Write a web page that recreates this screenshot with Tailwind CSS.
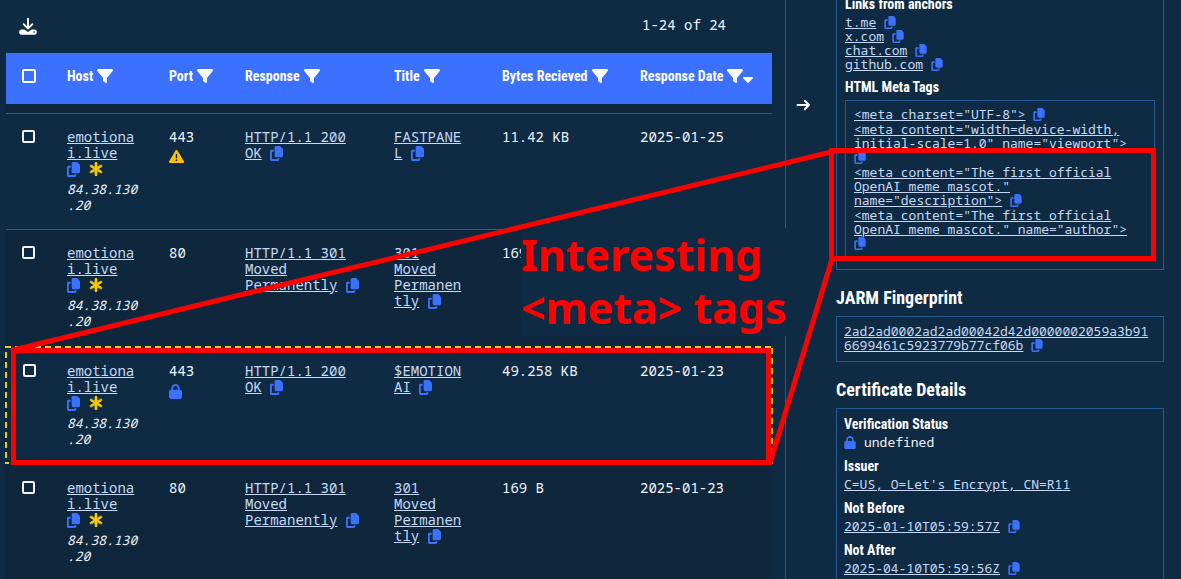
<!DOCTYPE html>
<html lang="en">
<head>
<meta charset="utf-8">
<title>Hosts</title>
<script src="https://cdn.jsdelivr.net/npm/@tailwindcss/browser@4"></script>
</head>
<body class="bg-[#0f2b43]">
<svg class="hidden" aria-hidden="true">
  <symbol id="copy" viewBox="0 0 448 512"><path d="M208 0H332.1c12.7 0 24.9 5.1 33.9 14.1l67.9 67.9c9 9 14.1 21.2 14.1 33.9V336c0 26.5-21.5 48-48 48H208c-26.5 0-48-21.5-48-48V48c0-26.5 21.5-48 48-48zM48 128h80v64H64V448H256V416h64v48c0 26.5-21.5 48-48 48H48c-26.5 0-48-21.5-48-48V176c0-26.5 21.5-48 48-48z"/></symbol>
  <symbol id="filter" viewBox="0 32 512 448" preserveAspectRatio="none"><path d="M3.9 54.9C10.5 40.9 24.5 32 40 32H472c15.5 0 29.5 8.9 36.1 22.9s4.6 30.5-5.2 42.5L320 320.9V448c0 12.1-6.8 23.2-17.7 28.6s-23.8 4.3-33.5-3l-64-48c-8.1-6-12.8-15.5-12.8-25.6V320.9L9 97.3C-.7 85.4-2.8 68.8 3.9 54.9z"/></symbol>
  <symbol id="lock" viewBox="0 0 448 512"><path d="M144 144v48H304V144c0-44.2-35.8-80-80-80s-80 35.8-80 80zM80 192V144C80 64.5 144.5 0 224 0s144 64.5 144 144v48h16c35.3 0 64 28.7 64 64V448c0 35.3-28.7 64-64 64H64c-35.3 0-64-28.7-64-64V256c0-35.3 28.7-64 64-64H80z"/></symbol>
  <symbol id="warn" viewBox="0 0 512 512"><path d="M256 32c14.2 0 27.3 7.5 34.5 19.8l216 368c7.3 12.4 7.3 27.7 .2 40.1S486.3 480 472 480H40c-14.3 0-27.6-7.7-34.7-20.1s-7-27.8 .2-40.1l216-368C228.7 39.5 241.8 32 256 32zm0 128c-13.3 0-24 10.7-24 24V296c0 13.3 10.7 24 24 24s24-10.7 24-24V184c0-13.3-10.7-24-24-24zm32 224a32 32 0 1 0 -64 0 32 32 0 1 0 64 0z"/></symbol>
  <symbol id="star" viewBox="0 32 384 448"><path stroke="#f5c80f" stroke-width="24" d="M192 32c17.7 0 32 14.3 32 32V199.5l111.5-66.9c15.2-9.1 34.8-4.2 43.9 11s4.2 34.8-11 43.9L254.2 256l114.3 68.6c15.2 9.1 20.1 28.7 11 43.9s-28.7 20.1-43.9 11L224 312.5V448c0 17.7-14.3 32-32 32s-32-14.3-32-32V312.5L48.5 379.4c-15.2 9.1-34.8 4.2-43.9-11s-4.2-34.8 11-43.9L129.8 256 15.5 187.4c-15.2-9.1-20.1-28.7-11-43.9s28.7-20.1 43.9-11L160 199.5V64c0-17.7 14.3-32 32-32z"/></symbol>
</svg>

<div class="relative flex h-screen overflow-hidden bg-[#0f2b43] font-['Noto_Sans_Mono','DejaVu_Sans_Mono',monospace] text-[14px] leading-4 text-[#f0f4fa]">

  <!-- Results list -->
  <main class="min-w-0 flex-1 border-r border-[#235c94] pl-[6px] pr-[13px]">
    <div class="flex h-[53px] items-start justify-between pl-[13px] pr-[46px] pt-[17px]">
      <button aria-label="Download">
        <svg class="h-[18px] w-[18px] text-white" viewBox="0 0 18 18" fill="none">
          <path d="M9 1.8v8.5M4.6 7.2 9 11.6l4.4-4.4" stroke="currentColor" stroke-width="1.9" stroke-linecap="round" stroke-linejoin="round"/>
          <path fill="currentColor" fill-rule="evenodd" d="M2.8 12.4h2.6L9 15l3.6-2.6h2.6a2.6 2.6 0 0 1 0 5.3H2.8a2.6 2.6 0 0 1 0-5.3zM15 14.3a.8.8 0 1 0 0 1.6.8.8 0 0 0 0-1.6z"/>
        </svg>
      </button>
      <p>1-24 of 24</p>
    </div>

    <table class="w-full table-fixed border-separate border-spacing-0 text-left">
      <colgroup>
        <col class="w-[61px]"><col class="w-[102px]"><col class="w-[76px]"><col class="w-[149px]"><col class="w-[108px]"><col class="w-[138px]"><col>
      </colgroup>
      <thead class="bg-[#3c71ff] font-['Noto_Sans_ExtraCondensed','Roboto_Condensed','Open_Sans_Condensed','Noto_Sans_Condensed','Roboto',sans-serif] text-[14px] text-white">
        <tr class="h-[51px] whitespace-nowrap">
          <th class="pb-[5px] pl-4"><input type="checkbox" aria-label="Select all" class="block size-[14px] appearance-none rounded-[2px] border-2 border-white"></th>
          <th class="pb-[5px]"><div class="flex items-center gap-1">Host <button aria-label="Filter host"><svg class="block h-[14px] w-4 fill-current"><use href="#filter"/></svg></button></div></th>
          <th class="pb-[5px]"><div class="flex items-center gap-1">Port <button aria-label="Filter port"><svg class="block h-[14px] w-4 fill-current"><use href="#filter"/></svg></button></div></th>
          <th class="pb-[5px]"><div class="flex items-center gap-1">Response <button aria-label="Filter response"><svg class="block h-[14px] w-4 fill-current"><use href="#filter"/></svg></button></div></th>
          <th class="pb-[5px]"><div class="flex items-center gap-1">Title <button aria-label="Filter title"><svg class="block h-[14px] w-4 fill-current"><use href="#filter"/></svg></button></div></th>
          <th class="pb-[5px]"><div class="flex items-center gap-1">Bytes Recieved <button aria-label="Filter bytes"><svg class="block h-[14px] w-4 fill-current"><use href="#filter"/></svg></button></div></th>
          <th class="pb-[5px]"><div class="flex items-center gap-1">Response Date <span class="flex items-end"><button aria-label="Filter date"><svg class="block h-[14px] w-4 fill-current"><use href="#filter"/></svg></button><button aria-label="Sort by date"><svg class="block h-[6px] w-[10px] fill-current" viewBox="0 0 10 6"><path d="M.9 0h8.2c.8 0 1.2.9.6 1.5L5.7 5.6c-.4.4-1 .4-1.4 0L.3 1.5C-.3.9.1 0 .9 0z"/></svg></button></span></div></th>
        </tr>
      </thead>
      <tbody class="align-top">
        <tr class="h-[9px] bg-[#0f273d]"><td colspan="7"></td></tr>

        <tr class="h-[116px]">
          <td class="border-t border-[#235c94] pl-4 pt-4"><input type="checkbox" aria-label="Select row 1" class="block size-[13px] appearance-none rounded-[2px] border-2 border-[#f0f4fa]"></td>
          <td class="wrap-anywhere border-t border-[#235c94] pr-[30px] pt-[15px]"><a href="#" class="text-[#c6d9f7] underline">emotionai.live</a><div class="flex h-4 items-center gap-[9px]"><button aria-label="Copy" class="text-[#3c71ff]"><svg class="block h-[15px] w-[13px] fill-current"><use href="#copy"/></svg></button><svg class="h-[14px] w-[14px] fill-[#f5c80f]"><use href="#star"/></svg></div><i class="mt-1 block text-[13px]">84.38.130.20</i></td>
          <td class="border-t border-[#235c94] pt-[15px]">443<svg class="mt-1 block size-[15px] fill-[#ffc107]"><use href="#warn"/></svg></td>
          <td class="border-t border-[#235c94] pr-[34px] pt-[15px]"><a href="#" class="text-[#c6d9f7] underline">HTTP/1.1 200 OK</a> <button aria-label="Copy" class="inline-flex h-4 items-center align-top text-[#3c71ff]"><svg class="h-[15px] w-[13px] fill-current"><use href="#copy"/></svg></button></td>
          <td class="wrap-anywhere border-t border-[#235c94] pr-[34px] pt-[15px]"><a href="#" class="text-[#c6d9f7] underline">FASTPANEL</a> <button aria-label="Copy" class="inline-flex h-4 items-center align-top text-[#3c71ff]"><svg class="h-[15px] w-[13px] fill-current"><use href="#copy"/></svg></button></td>
          <td class="border-t border-[#235c94] pt-[15px]">11.42 KB</td>
          <td class="border-t border-[#235c94] pt-[15px]">2025-01-25</td>
        </tr>

        <tr class="h-[118px] bg-[#0f273d]">
          <td class="border-t border-[#235c94] pl-4 pt-4"><input type="checkbox" aria-label="Select row 2" class="block size-[13px] appearance-none rounded-[2px] border-2 border-[#f0f4fa]"></td>
          <td class="wrap-anywhere border-t border-[#235c94] pr-[30px] pt-[15px]"><a href="#" class="text-[#c6d9f7] underline">emotionai.live</a><div class="flex h-4 items-center gap-[9px]"><button aria-label="Copy" class="text-[#3c71ff]"><svg class="block h-[15px] w-[13px] fill-current"><use href="#copy"/></svg></button><svg class="h-[14px] w-[14px] fill-[#f5c80f]"><use href="#star"/></svg></div><i class="mt-1 block text-[13px]">84.38.130.20</i></td>
          <td class="border-t border-[#235c94] pt-[15px]">80</td>
          <td class="border-t border-[#235c94] pr-[34px] pt-[15px]"><a href="#" class="text-[#c6d9f7] underline">HTTP/1.1 301 Moved Permanently</a> <button aria-label="Copy" class="inline-flex h-4 items-center align-top text-[#3c71ff]"><svg class="h-[15px] w-[13px] fill-current"><use href="#copy"/></svg></button></td>
          <td class="wrap-anywhere border-t border-[#235c94] pr-[34px] pt-[15px]"><a href="#" class="text-[#c6d9f7] underline">301 Moved Permanently</a> <button aria-label="Copy" class="inline-flex h-4 items-center align-top text-[#3c71ff]"><svg class="h-[15px] w-[13px] fill-current"><use href="#copy"/></svg></button></td>
          <td class="border-t border-[#235c94] pt-[15px]">169 B</td>
          <td class="border-t border-[#235c94] pt-[15px]"></td>
        </tr>

        <tr class="relative h-[117px]">
          <td class="pl-[17px] pt-[17px]"><input type="checkbox" aria-label="Select row 3" class="block size-[13px] appearance-none rounded-[2px] border-2 border-[#f0f4fa]"><svg class="pointer-events-none absolute -left-px -top-px h-[calc(100%+1px)] w-[calc(100%+2px)]" fill="none"><rect width="100%" height="100%" stroke="#f5c80f" stroke-width="4" stroke-dasharray="6 4"/></svg></td>
          <td class="wrap-anywhere pr-[30px] pt-4"><a href="#" class="text-[#c6d9f7] underline">emotionai.live</a><div class="flex h-4 items-center gap-[9px]"><button aria-label="Copy" class="text-[#3c71ff]"><svg class="block h-[15px] w-[13px] fill-current"><use href="#copy"/></svg></button><svg class="h-[14px] w-[14px] fill-[#f5c80f]"><use href="#star"/></svg></div><i class="mt-1 block text-[13px]">84.38.130.20</i></td>
          <td class="pt-4">443<svg class="mt-[5px] block h-[15px] w-[13px] fill-[#3c71ff]"><use href="#lock"/></svg></td>
          <td class="pr-[34px] pt-4"><a href="#" class="text-[#c6d9f7] underline">HTTP/1.1 200 OK</a> <button aria-label="Copy" class="inline-flex h-4 items-center align-top text-[#3c71ff]"><svg class="h-[15px] w-[13px] fill-current"><use href="#copy"/></svg></button></td>
          <td class="wrap-anywhere pr-[34px] pt-4"><a href="#" class="text-[#c6d9f7] underline">$EMOTIONAI</a> <button aria-label="Copy" class="inline-flex h-4 items-center align-top text-[#3c71ff]"><svg class="h-[15px] w-[13px] fill-current"><use href="#copy"/></svg></button></td>
          <td class="pt-4">49.258 KB</td>
          <td class="pt-4">2025-01-23</td>
        </tr>

        <tr class="h-[117px] bg-[#0f273d]">
          <td class="pl-4 pt-[17px]"><input type="checkbox" aria-label="Select row 4" class="block size-[13px] appearance-none rounded-[2px] border-2 border-[#f0f4fa]"></td>
          <td class="wrap-anywhere pr-[30px] pt-4"><a href="#" class="text-[#c6d9f7] underline">emotionai.live</a><div class="flex h-4 items-center gap-[9px]"><button aria-label="Copy" class="text-[#3c71ff]"><svg class="block h-[15px] w-[13px] fill-current"><use href="#copy"/></svg></button><svg class="h-[14px] w-[14px] fill-[#f5c80f]"><use href="#star"/></svg></div><i class="mt-1 block text-[13px]">84.38.130.20</i></td>
          <td class="pt-4">80</td>
          <td class="pr-[34px] pt-4"><a href="#" class="text-[#c6d9f7] underline">HTTP/1.1 301 Moved Permanently</a> <button aria-label="Copy" class="inline-flex h-4 items-center align-top text-[#3c71ff]"><svg class="h-[15px] w-[13px] fill-current"><use href="#copy"/></svg></button></td>
          <td class="wrap-anywhere pr-[34px] pt-4"><a href="#" class="text-[#c6d9f7] underline">301 Moved Permanently</a> <button aria-label="Copy" class="inline-flex h-4 items-center align-top text-[#3c71ff]"><svg class="h-[15px] w-[13px] fill-current"><use href="#copy"/></svg></button></td>
          <td class="pt-4">169 B</td>
          <td class="pt-4">2025-01-23</td>
        </tr>
      </tbody>
    </table>
  </main>

  <!-- Details -->
  <div class="w-[50px] shrink-0 pl-[10px] pt-[97px]">
    <button aria-label="Collapse details" class="block text-white"><svg class="block size-4" viewBox="0 0 16 16" fill="none" stroke="currentColor" stroke-width="2" stroke-linecap="round" stroke-linejoin="round"><path d="M1.5 8h11.5M8.8 3.8 13 8l-4.2 4.2"/></svg></button>
  </div>
  <aside class="mr-[17px] w-[328px] shrink-0 text-[13px] leading-[14px]">
    <section class="-mt-[6px] border-x border-b border-[#235c94] px-2 pb-[9px]">
      <h3 class="font-['Noto_Sans_ExtraCondensed','Roboto_Condensed','Open_Sans_Condensed','Noto_Sans_Condensed','Roboto',sans-serif] text-[14px] leading-5 font-bold text-white">Links from anchors</h3>
      <ul class="mt-px">
        <li><a href="#" class="text-[#c6d9f7] underline">t.me</a> <button aria-label="Copy" class="inline-flex h-[14px] items-center align-top text-[#3c71ff]"><svg class="h-[13px] w-3 fill-current"><use href="#copy"/></svg></button></li>
        <li><a href="#" class="text-[#c6d9f7] underline">x.com</a> <button aria-label="Copy" class="inline-flex h-[14px] items-center align-top text-[#3c71ff]"><svg class="h-[13px] w-3 fill-current"><use href="#copy"/></svg></button></li>
        <li><a href="#" class="text-[#c6d9f7] underline">chat.com</a> <button aria-label="Copy" class="inline-flex h-[14px] items-center align-top text-[#3c71ff]"><svg class="h-[13px] w-3 fill-current"><use href="#copy"/></svg></button></li>
        <li><a href="#" class="text-[#c6d9f7] underline">github.com</a> <button aria-label="Copy" class="inline-flex h-[14px] items-center align-top text-[#3c71ff]"><svg class="h-[13px] w-3 fill-current"><use href="#copy"/></svg></button></li>
      </ul>
      <h3 class="mt-[6px] font-['Noto_Sans_ExtraCondensed','Roboto_Condensed','Open_Sans_Condensed','Noto_Sans_Condensed','Roboto',sans-serif] text-[14px] leading-5 font-bold text-white">HTML Meta Tags</h3>
      <ul class="mt-[3px] flex flex-col gap-px border border-[#235c94] pb-[9px] pl-2 pr-3 pt-[6px]">
        <li><a href="#" class="text-[#c6d9f7] underline">&lt;meta charset="UTF-8"&gt;</a> <button aria-label="Copy" class="inline-flex h-[14px] items-center align-top text-[#3c71ff]"><svg class="h-[13px] w-3 fill-current"><use href="#copy"/></svg></button></li>
        <li><a href="#" class="text-[#c6d9f7] underline">&lt;meta content="width=device-width, initial-scale=1.0" name="viewport"&gt;</a> <button aria-label="Copy" class="inline-flex h-[14px] items-center align-top text-[#3c71ff]"><svg class="h-[13px] w-3 fill-current"><use href="#copy"/></svg></button></li>
        <li><a href="#" class="text-[#c6d9f7] underline">&lt;meta content="The first official OpenAI meme mascot." name="description"&gt;</a> <button aria-label="Copy" class="inline-flex h-[14px] items-center align-top text-[#3c71ff]"><svg class="h-[13px] w-3 fill-current"><use href="#copy"/></svg></button></li>
        <li><a href="#" class="text-[#c6d9f7] underline">&lt;meta content="The first official OpenAI meme mascot." name="author"&gt;</a> <button aria-label="Copy" class="inline-flex h-[14px] items-center align-top text-[#3c71ff]"><svg class="h-[13px] w-3 fill-current"><use href="#copy"/></svg></button></li>
      </ul>
    </section>

    <h2 class="mt-4 font-['Noto_Sans_ExtraCondensed','Roboto_Condensed','Open_Sans_Condensed','Noto_Sans_Condensed','Roboto',sans-serif] text-[18px] leading-6 font-bold text-white">JARM Fingerprint</h2>
    <div class="mt-[6px] border border-[#235c94] pb-[9px] pl-[7px] pr-3 pt-[7px] break-all"><a href="#" class="text-[#c6d9f7] underline">2ad2ad0002ad2ad00042d42d0000002059a3b916699461c5923779b77cf06b</a> <button aria-label="Copy" class="inline-flex h-[14px] items-center align-top text-[#3c71ff]"><svg class="h-[13px] w-3 fill-current"><use href="#copy"/></svg></button></div>

    <h2 class="mt-4 font-['Noto_Sans_ExtraCondensed','Roboto_Condensed','Open_Sans_Condensed','Noto_Sans_Condensed','Roboto',sans-serif] text-[18px] leading-6 font-bold text-white">Certificate Details</h2>
    <dl class="mt-[6px] flex flex-col gap-[7px] border border-[#235c94] px-[7px] pb-8 pt-[5px]">
      <div>
        <dt class="font-['Noto_Sans_ExtraCondensed','Roboto_Condensed','Open_Sans_Condensed','Noto_Sans_Condensed','Roboto',sans-serif] text-[14px] leading-5 font-bold text-white">Verification Status</dt>
        <dd class="mt-px flex items-center gap-2"><svg class="h-[13px] w-3 fill-[#3c71ff]"><use href="#lock"/></svg>undefined</dd>
      </div>
      <div>
        <dt class="font-['Noto_Sans_ExtraCondensed','Roboto_Condensed','Open_Sans_Condensed','Noto_Sans_Condensed','Roboto',sans-serif] text-[14px] leading-5 font-bold text-white">Issuer</dt>
        <dd class="mt-px"><a href="#" class="text-[#c6d9f7] underline">C=US, O=Let's Encrypt, CN=R11</a></dd>
      </div>
      <div>
        <dt class="font-['Noto_Sans_ExtraCondensed','Roboto_Condensed','Open_Sans_Condensed','Noto_Sans_Condensed','Roboto',sans-serif] text-[14px] leading-5 font-bold text-white">Not Before</dt>
        <dd class="mt-px"><a href="#" class="text-[#c6d9f7] underline">2025-01-10T05:59:57Z</a> <button aria-label="Copy" class="inline-flex h-[14px] items-center align-top text-[#3c71ff]"><svg class="h-[13px] w-3 fill-current"><use href="#copy"/></svg></button></dd>
      </div>
      <div>
        <dt class="font-['Noto_Sans_ExtraCondensed','Roboto_Condensed','Open_Sans_Condensed','Noto_Sans_Condensed','Roboto',sans-serif] text-[14px] leading-5 font-bold text-white">Not After</dt>
        <dd class="mt-px"><a href="#" class="text-[#c6d9f7] underline">2025-04-10T05:59:56Z</a> <button aria-label="Copy" class="inline-flex h-[14px] items-center align-top text-[#3c71ff]"><svg class="h-[13px] w-3 fill-current"><use href="#copy"/></svg></button></dd>
      </div>
    </dl>
  </aside>

  <!-- Callout drawn over the page -->
  <p class="pointer-events-none absolute left-[521px] top-[228px] h-[108px] w-[265px] whitespace-nowrap bg-[#0f2b43] font-['Noto_Sans',sans-serif] text-[43px] leading-[53px] font-bold text-[#ff0000]">Interesting<br>&lt;meta&gt; tags</p>
  <svg class="pointer-events-none absolute left-0 top-0" width="1181" height="579" fill="none" stroke="#ff0000" stroke-width="5">
    <path stroke-linecap="round" d="M13 350 831 152M770 463 832 259"/>
    <rect x="13.5" y="350.5" width="755" height="112"/>
    <rect x="831.5" y="150.5" width="322" height="108"/>
  </svg>
</div>
</body>
</html>
